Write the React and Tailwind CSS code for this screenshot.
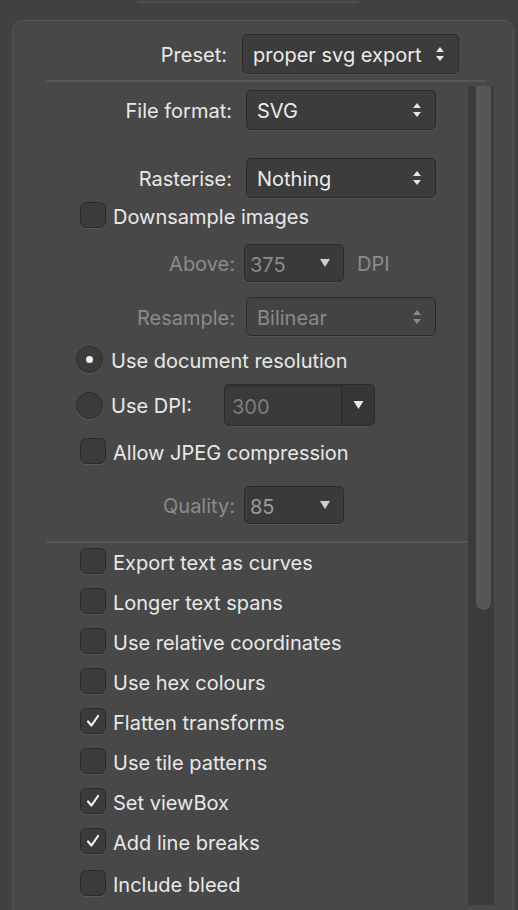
import React from "react";

const font = { fontFamily: "Inter, 'Liberation Sans', sans-serif" };

function UpDown({ dim }) {
  const c = dim ? "#8a8a8a" : "#e6e6e6";
  return (
    <svg width="10" height="18" viewBox="0 0 10 18" className="shrink-0">
      <polygon points="5,2 9,7 1,7" fill={c} />
      <polygon points="5,16 9,11 1,11" fill={c} />
    </svg>
  );
}

function Down({ color = "#e6e6e6", w = 10 }) {
  return (
    <svg width={w} height="9" viewBox="0 0 10 9" className="shrink-0">
      <polygon points="0,0 10,0 5,8" fill={color} />
    </svg>
  );
}

function Label({ w, children, dim }) {
  return (
    <div
      className={`shrink-0 pt-[2px] text-right ${dim ? "text-[#8b8b8b]" : "text-[#e8e8e8]"}`}
      style={{ width: w }}
    >
      {children}
    </div>
  );
}

function Select({ w, h, value, dim, gap, pl = "pl-[10px]" }) {
  return (
    <div
      className={`flex items-center justify-between rounded-[5px] border border-[#2a2a2a] ${dim ? "bg-[#434343]" : "bg-[#3c3c3c]"} ${pl} pr-[13px] shadow-[0_1px_0_#555]`}
      style={{ width: w, height: h, marginLeft: gap }}
    >
      <span className={`pt-[2px] ${dim ? "text-[#8a8a8a]" : "text-[#ececec]"}`}>{value}</span>
      <UpDown dim={dim} />
    </div>
  );
}

function Combo({ w, h, value, gap, valueColor = "text-[#8a8a8a]" }) {
  return (
    <div
      className="flex items-center justify-between rounded-[5px] border border-[#2a2a2a] bg-[#3a3a3a] pl-[5px] pr-[13px] shadow-[0_1px_0_#555]"
      style={{ width: w, height: h, marginLeft: gap }}
    >
      <span className={`pt-[3px] ${valueColor}`}>{value}</span>
      <Down color="#d0d0d0" w={10} />
    </div>
  );
}

function Check({ checked, label, mt }) {
  return (
    <div className="flex h-[26px] items-center" style={{ marginTop: mt }}>
      <div className="ml-[34px] flex h-[26px] w-[26px] shrink-0 items-center justify-center rounded-[6px] border border-[#2b2b2b] bg-[#3b3b3b] shadow-[0_1px_0_#585858]">
        {checked && (
          <svg width="16" height="16" viewBox="0 0 16 16">
            <path d="M3 8.5 L6.5 12.5 L13 3" fill="none" stroke="#f2f2f2" strokeWidth="2.2" strokeLinecap="round" strokeLinejoin="round" />
          </svg>
        )}
      </div>
      <span className="ml-[7px] pt-[3px] text-[#e8e8e8]">{label}</span>
    </div>
  );
}

function Radio({ on, children, mt, h = 27 }) {
  return (
    <div className="flex items-center" style={{ marginTop: mt, height: h }}>
      <div className="ml-[30px] flex h-[27px] w-[27px] shrink-0 items-center justify-center rounded-full border border-[#2b2b2b] bg-[#3b3b3b] shadow-[0_1px_0_#585858]">
        {on && <div className="h-[7px] w-[7px] rounded-full bg-[#f0f0f0]" />}
      </div>
      {children}
    </div>
  );
}

export default function App() {
  return (
    <div className="h-[910px] w-[518px] overflow-hidden bg-[#414141] text-[20px]" style={font}>
      <div className="ml-[137px] h-[3px] w-[222px] rounded-b-[3px] border-b border-[#555] bg-[#464646]" />
      <div className="ml-[12px] mt-[17px] h-[960px] w-[502px] rounded-[10px] border border-[#555] bg-[#484848]">
        {/* Preset */}
        <div className="mt-[13px] flex h-[40px] items-center pl-[33px]">
          <Label w={181}>Preset:</Label>
          <Select w={217} h={40} value="proper svg export" gap={15} />
        </div>
        <div className="ml-[33px] mt-[6px] h-[2px] w-[440px] bg-[#565656]" />
        <div className="mt-[4px] flex pl-[33px]">
          <div className="flex w-[422px] flex-col">
            <div className="mt-[4px] flex h-[40px] items-center">
              <Label w={186}>File format:</Label>
              <Select w={190} h={40} value="SVG" gap={14} />
            </div>
            <div className="mt-[28px] flex h-[40px] items-center">
              <Label w={186}>Rasterise:</Label>
              <Select w={190} h={40} value="Nothing" gap={14} />
            </div>
            <Check label="Downsample images" mt={4} />
            <div className="mt-[16px] flex h-[38px] items-center">
              <Label w={189} dim>Above:</Label>
              <Combo w={100} h={38} value="375" gap={9} />
              <span className="ml-[13px] pt-[2px] text-[#8b8b8b]">DPI</span>
            </div>
            <div className="mt-[15px] flex h-[39px] items-center">
              <Label w={189} dim>Resample:</Label>
              <Select w={190} h={39} value="Bilinear" gap={11} dim />
            </div>
            <Radio on mt={10}>
              <span className="ml-[8px] pt-[3px] text-[#e8e8e8]">Use document resolution</span>
            </Radio>
            <Radio mt={11} h={42}>
              <span className="ml-[8px] w-[113px] pt-[2px] text-[#e8e8e8]">Use DPI:</span>
              <div className="flex h-[42px] w-[151px] rounded-[5px] border border-[#2a2a2a] bg-[#3a3a3a] shadow-[0_1px_0_#555]">
                <div className="flex flex-1 items-center border-t-2 border-[#333] pl-[7px] pt-[2px] text-[#7e7e7e]">300</div>
                <div className="flex w-[33px] items-center justify-center rounded-r-[4px] border-l border-[#2a2a2a] bg-[#363636]">
                  <Down color="#e8e8e8" w={11} />
                </div>
              </div>
            </Radio>
            <Check label="Allow JPEG compression" mt={12} />
            <div className="mt-[22px] flex h-[38px] items-center">
              <Label w={189} dim>Quality:</Label>
              <Combo w={100} h={38} value="85" gap={9} valueColor="text-[#9a9a9a]" />
            </div>
            <div className="mt-[17px] h-[2px] w-[422px] bg-[#565656]" />
            <Check label="Export text as curves" mt={5} />
            <Check label="Longer text spans" mt={14} />
            <Check label="Use relative coordinates" mt={14} />
            <Check label="Use hex colours" mt={14} />
            <Check checked label="Flatten transforms" mt={14} />
            <Check label="Use tile patterns" mt={14} />
            <Check checked label="Set viewBox" mt={14} />
            <Check checked label="Add line breaks" mt={14} />
            <Check label="Include bleed" mt={16} />
          </div>
          <div className="flex h-[819px] w-[26px] bg-[#3b3b3b]">
            <div className="ml-[8px] h-[524px] w-[15px] rounded-b-[8px] bg-[#565656]" />
          </div>
        </div>
      </div>
    </div>
  );
}
